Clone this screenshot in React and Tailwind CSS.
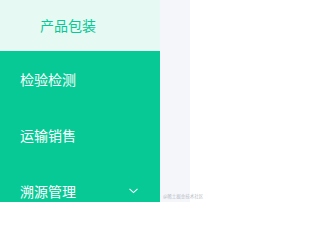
export default function App() {
  const font = { fontFamily: '"Noto Sans CJK SC", "Liberation Sans", sans-serif' };
  return (
    <div className="flex w-[202px] h-[202px] overflow-hidden bg-white" style={font}>
      <div className="w-[160px] h-full bg-[#06c995] flex flex-col shrink-0">
        <div className="h-[51px] shrink-0 bg-[#e6f9f3] flex items-center pl-[40px] text-[14px] text-[#06c995]">
          产品包装
        </div>
        <div className="h-[56px] shrink-0 flex items-center pl-[20px] text-[14px] text-white">检验检测</div>
        <div className="h-[56px] shrink-0 flex items-center pl-[20px] text-[14px] text-white">运输销售</div>
        <div className="h-[56px] shrink-0 flex items-center pl-[20px] pr-[22px] text-[14px] text-white justify-between">
          <span>溯源管理</span>
          <svg width="9" height="6" viewBox="0 0 9 6" fill="none">
            <polyline points="0.5,0.8 4.5,4.6 8.5,0.8" stroke="white" strokeWidth="1.1" />
          </svg>
        </div>
      </div>
      <div className="w-[30px] h-full bg-[#f5f6fa] shrink-0 relative"></div>
      <div className="flex-1 h-full bg-white"></div>
      <div className="absolute left-[163px] top-[194px] text-[4.5px] leading-none text-[#b8bcc4] whitespace-nowrap">
        @稀土掘金技术社区
      </div>
    </div>
  );
}
